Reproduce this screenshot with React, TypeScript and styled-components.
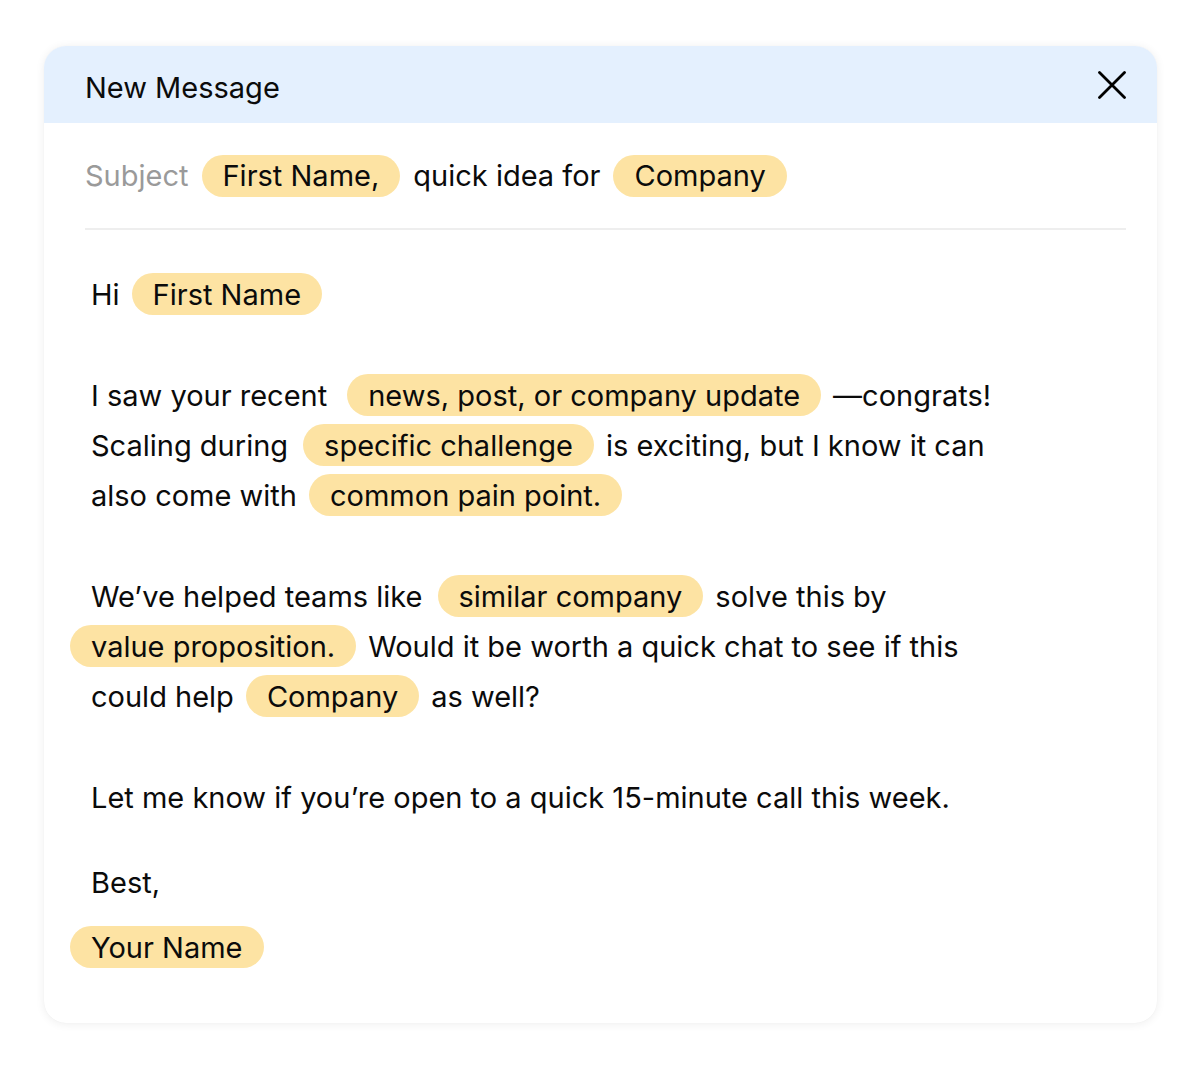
import styled, { createGlobalStyle } from "styled-components";

const GlobalStyle = createGlobalStyle`
  html, body {
    margin: 0;
    padding: 0;
    background: #ffffff;
    font-family: "Inter", "Noto Sans", sans-serif;
    color: #0b0b0b;
  }
`;

const Page = styled.div`
  padding: 46px 43px 42px 44px;
`;

const Card = styled.div`
  width: 1113px;
  background: #fff;
  border-radius: 22px;
  overflow: hidden;
  box-shadow: 0 1px 10px rgba(0, 0, 0, 0.07), 0 0 1px rgba(0, 0, 0, 0.06);
`;

const Header = styled.div`
  height: 77px;
  background: #e4f0fe;
  display: flex;
  align-items: center;
  justify-content: space-between;
  padding: 0 31px 0 41px;
`;

const Title = styled.div`
  font-size: 29px;
  padding-top: 5px;
`;

const CloseBtn = styled.button`
  border: none;
  background: none;
  padding: 0;
  width: 28px;
  height: 28px;
  display: grid;
  place-items: center;
  cursor: pointer;
`;

const Content = styled.div`
  padding: 0 31px 51px 41px;
`;

const SubjectRow = styled.div`
  height: 105px;
  display: flex;
  align-items: center;
  gap: 13px;
  border-bottom: 2px solid #eeeeee;
  font-size: 29px;
`;

const Label = styled.span`
  color: #9a9a9a;
`;

const Body = styled.div`
  padding: 39px 0 0 6px;
  font-size: 29px;
`;

const Line = styled.div<{ $space?: number }>`
  height: 50px;
  display: flex;
  align-items: center;
  gap: 12px;
  white-space: nowrap;
  margin-top: ${(p) => p.$space ?? 0}px;
`;

const Pill = styled.span<{ $lead?: boolean }>`
  display: inline-flex;
  align-items: center;
  height: 42px;
  padding: 0 21px;
  border-radius: 21px;
  background: #fde3a3;
  margin-left: ${(p) => (p.$lead ? "-21px" : "0")};
`;

const CloseIcon = () => (
  <svg width="28" height="28" viewBox="0 0 28 28">
    <path d="M1.5 1.5L26.5 26.5M26.5 1.5L1.5 26.5" stroke="#000" strokeWidth="2.8" strokeLinecap="round" />
  </svg>
);

export default function App() {
  return (
    <Page>
      <GlobalStyle />
      <Card>
        <Header>
          <Title>New Message</Title>
          <CloseBtn aria-label="Close">
            <CloseIcon />
          </CloseBtn>
        </Header>
        <Content>
          <SubjectRow>
            <Label>Subject</Label>
            <Pill>First Name,</Pill>
            <span>quick idea for</span>
            <Pill>Company</Pill>
          </SubjectRow>
          <Body>
            <Line>
              <span>Hi</span>
              <Pill>First Name</Pill>
            </Line>
            <Line $space={51}>
              <span>I saw your recent</span>
              <Pill style={{ marginLeft: 8 }}>news, post, or company update</Pill>
              <span>—congrats!</span>
            </Line>
            <Line>
              <span>Scaling during</span>
              <Pill style={{ marginLeft: 3 }}>specific challenge</Pill>
              <span>is exciting, but I know it can</span>
            </Line>
            <Line>
              <span>also come with</span>
              <Pill>common pain point.</Pill>
            </Line>
            <Line $space={51}>
              <span>We’ve helped teams like</span>
              <Pill style={{ marginLeft: 3 }}>similar company</Pill>
              <span>solve this by</span>
            </Line>
            <Line>
              <Pill $lead>value proposition.</Pill>
              <span>Would it be worth a quick chat to see if this</span>
            </Line>
            <Line>
              <span>could help</span>
              <Pill>Company</Pill>
              <span>as well?</span>
            </Line>
            <Line $space={51}>
              <span>Let me know if you’re open to a quick 15-minute call this week.</span>
            </Line>
            <Line $space={35}>
              <span>Best,</span>
            </Line>
            <Line $space={15}>
              <Pill $lead>Your Name</Pill>
            </Line>
          </Body>
        </Content>
      </Card>
    </Page>
  );
}
